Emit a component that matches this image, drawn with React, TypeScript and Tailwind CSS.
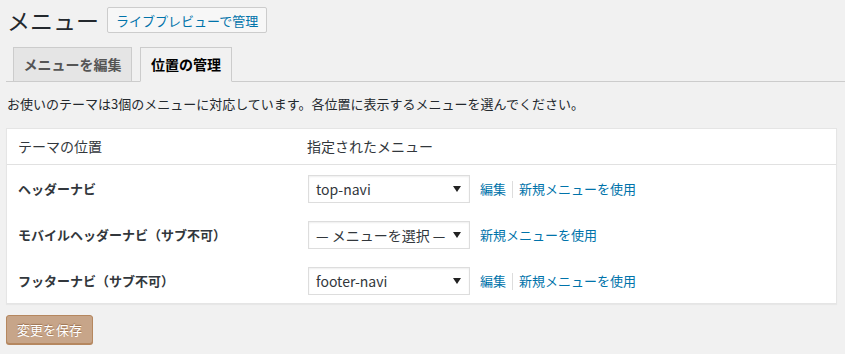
import React from 'react';

const jp = { fontFamily: '"Noto Sans CJK JP", "Noto Sans", sans-serif' };

interface Row {
  label: string;
  value: string;
  canEdit: boolean;
}

const rows: Row[] = [
  { label: 'ヘッダーナビ', value: 'top-navi', canEdit: true },
  { label: 'モバイルヘッダーナビ（サブ不可）', value: '— メニューを選択 —', canEdit: false },
  { label: 'フッターナビ（サブ不可）', value: 'footer-navi', canEdit: true },
];

const FakeSelect: React.FC<{ value: string }> = ({ value }) => (
  <div className="flex items-center justify-between w-[162px] h-[28px] border border-[#dddddd] bg-white pl-[7px] pr-[8px] text-[14px] text-[#32373c] shadow-[inset_0_1px_2px_rgba(0,0,0,0.07)]">
    <span className="whitespace-nowrap leading-[18px]">{value}</span>
    <svg width="8" height="6" viewBox="0 0 8 6" className="shrink-0">
      <path d="M0 0h8L4 6z" fill="#222" />
    </svg>
  </div>
);

const App: React.FC = () => {
  return (
    <div className="w-[845px] h-[354px] bg-[#f1f1f1] text-[#23282d] overflow-hidden" style={jp}>
      {/* heading */}
      <div className="flex items-center pt-[7px] pl-[7px] h-[33px]">
        <h1 className="text-[23px] font-normal leading-none text-[#23282d]">メニュー</h1>
        <button className="ml-[8px] h-[26px] px-[8px] border border-[#cccccc] bg-[#f7f7f7] rounded-[2px] text-[13px] text-[#0073aa] leading-none">
          ライブプレビューで管理
        </button>
      </div>

      {/* tabs */}
      <div className="ml-[6px] mt-[14px] flex items-end h-[35px] border-b border-[#cccccc] pl-[7px] gap-[8px]">
        <div className="h-[35px] -mb-px w-[119px] flex items-center justify-center border border-[#cccccc] bg-[#e5e5e5] text-[14px] font-bold text-[#555555]">
          メニューを編集
        </div>
        <div className="h-[35px] -mb-px w-[92px] flex items-center justify-center border border-[#cccccc] border-b-[#f1f1f1] bg-[#f1f1f1] text-[14px] font-bold text-black">
          位置の管理
        </div>
      </div>

      {/* description */}
      <p className="pl-[7px] mt-[13px] text-[13px] leading-[18px] text-[#23282d]">
        お使いのテーマは3個のメニューに対応しています。各位置に表示するメニューを選んでください。
      </p>

      {/* table */}
      <div className="ml-[6px] mt-[15px] w-[831px] bg-white border border-[#e5e5e5] shadow-[0_1px_1px_rgba(0,0,0,0.04)]">
        <div className="grid grid-cols-[290px_1fr] h-[36px] items-center border-b border-[#e1e1e1] text-[14px] text-[#32373c]">
          <div className="pl-[11px]">テーマの位置</div>
          <div className="pl-[10px]">指定されたメニュー</div>
        </div>
        {rows.map((r) => (
          <div key={r.label} className="grid grid-cols-[290px_1fr] h-[46px] items-center pt-[2px]">
            <div className="pl-[11px] text-[13px] font-bold text-[#32373c]">{r.label}</div>
            <div className="pl-[11px] flex items-center">
              <FakeSelect value={r.value} />
              <div className="flex items-center ml-[10px] text-[13px] text-[#0073aa]">
                {r.canEdit && (
                  <>
                    <span>編集</span>
                    <span className="mx-[6px] w-px h-[17px] bg-[#dddddd]" />
                  </>
                )}
                <span>新規メニューを使用</span>
              </div>
            </div>
          </div>
        ))}
      </div>

      {/* save */}
      <div className="pl-[6px] mt-[11px]">
        <button className="h-[29px] w-[87px] rounded-[3px] border border-[#b5875f] bg-[#c7a589] text-[13px] text-white [text-shadow:0_-1px_1px_#9c7251] shadow-[0_1px_0_#b5875f]">
          変更を保存
        </button>
      </div>
    </div>
  );
};

export default App;
